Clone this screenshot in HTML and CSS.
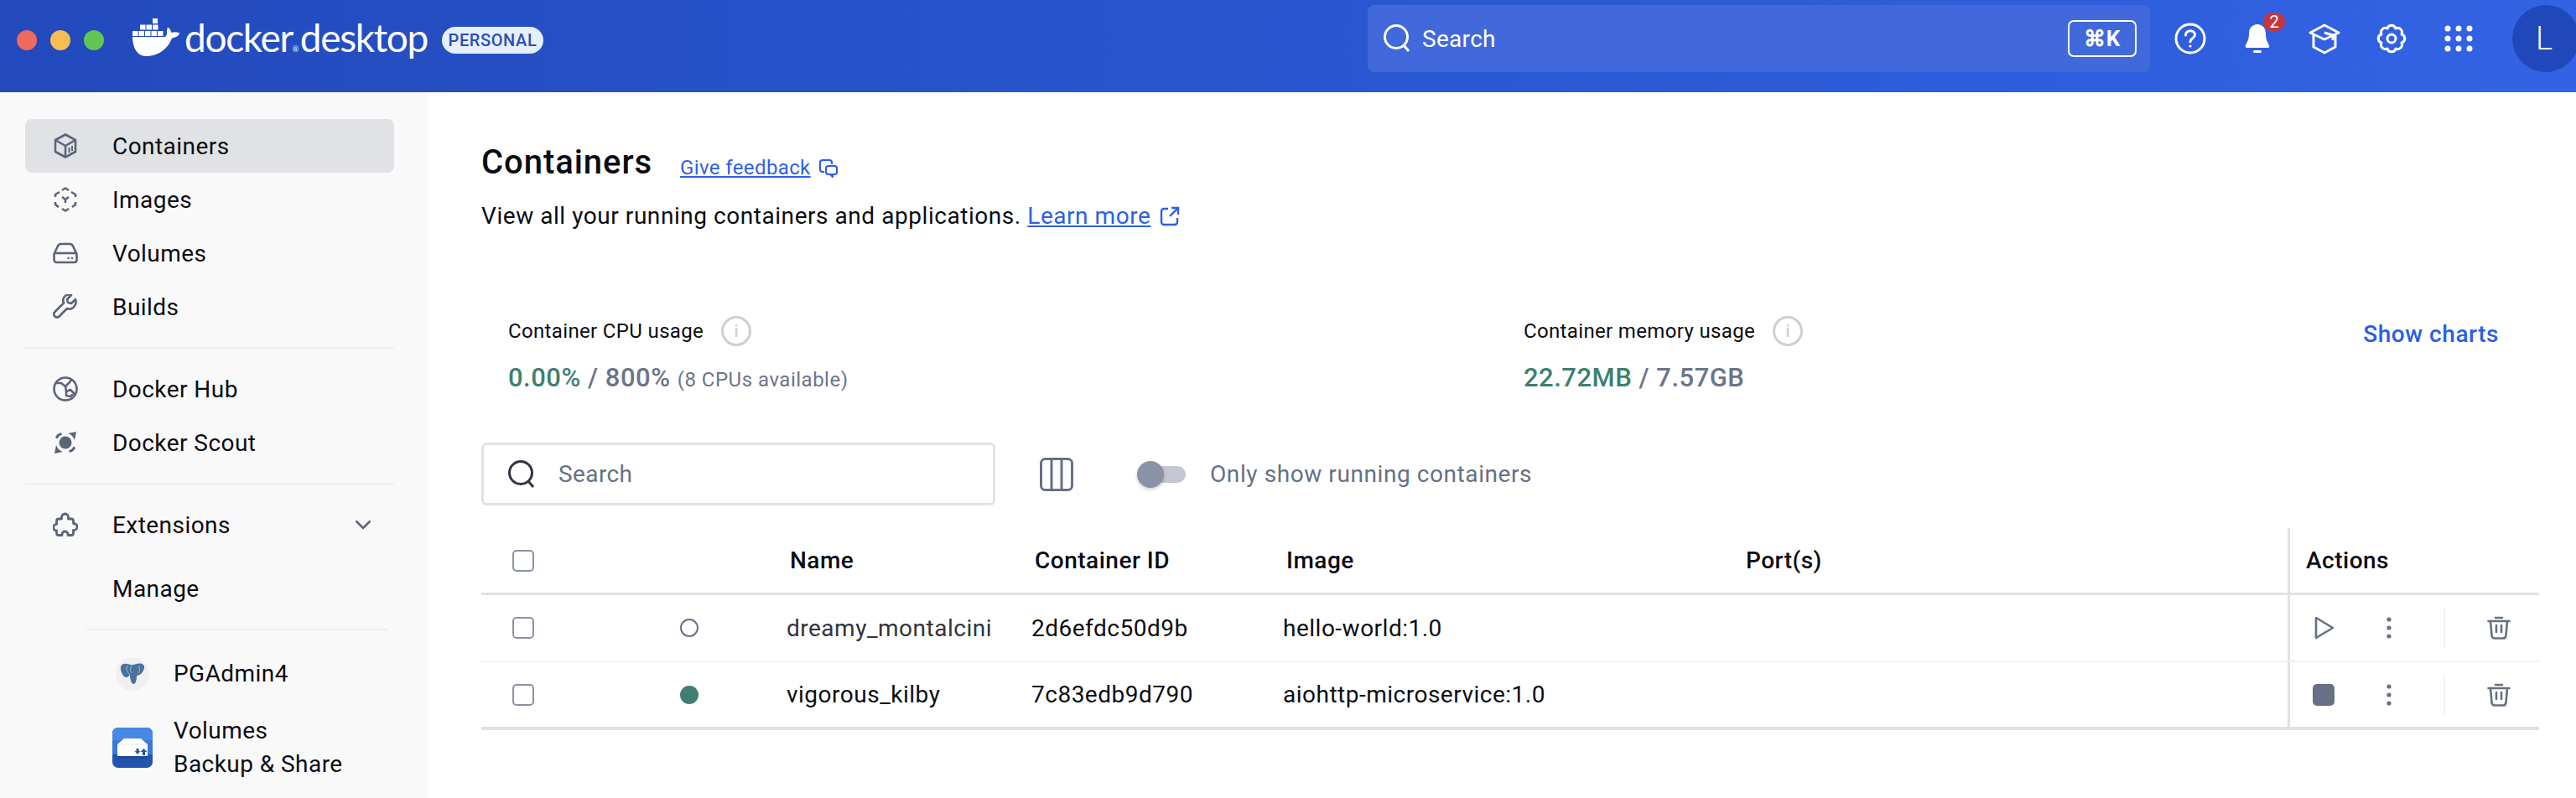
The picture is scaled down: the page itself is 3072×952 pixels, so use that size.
FILE: index.html
```html
<!DOCTYPE html>
<html lang="en">
<head>
<meta charset="utf-8">
<title>Docker Desktop</title>
<link rel="stylesheet" href="styles.css">
</head>
<body>
<div class="app">
  <header class="topbar">
    <div class="lights"><span class="light red"></span><span class="light yellow"></span><span class="light green"></span></div>
    <div class="brand">
      <svg class="whale" viewBox="0 0 57 45" fill="#fff"><rect x="24" y="0" width="6" height="6"/><rect x="9" y="7.500" width="6.500" height="6"/><rect x="16.500" y="7.500" width="6.500" height="6"/><rect x="24" y="7.500" width="6.500" height="6"/><rect x="0" y="15" width="6.500" height="6"/><rect x="7.500" y="15" width="6.500" height="6"/><rect x="15" y="15" width="6.500" height="6"/><rect x="22.500" y="15" width="6.500" height="6"/><rect x="30" y="15" width="6.500" height="6"/><path d="M0 22H38C40 22 41 20 41 16C41 14 41.500 12 42 10.500C44.500 12 46 14.500 46.500 17C49 16 52.500 16 56.500 17.500C55 21 51 23 47 23.500C43 35 32 45 16 45C6 45 0 35 0 22z"/></svg>
      <span class="wordmark">docker<i class="reg">®</i><span class="wordmark-b">desktop</span></span>
      <span class="plan">PERSONAL</span>
    </div>
    <div class="global-search">
      <svg class="ic33" viewBox="0 0 34 34" fill="none" stroke="#fff" stroke-width="3"><circle cx="16" cy="15" r="13.500"/><path d="M25 25l6 7"/></svg>
      <span class="global-search-text">Search</span>
      <kbd class="shortcut">⌘K</kbd>
    </div>
    <div class="top-icons">
      <span class="top-icon"><svg viewBox="0 0 38 38" fill="none" stroke="#fff" stroke-width="3"><circle cx="19" cy="19" r="17"/><path d="M13.500 15c0-3.200 2.400-5.300 5.500-5.300s5.500 2 5.500 4.800c0 4.500-5.500 4-5.500 8.300" stroke-linecap="round"/><circle cx="19" cy="28" r="1.600" fill="#fff" stroke="none"/></svg></span>
      <span class="top-icon bell"><svg viewBox="0 0 38 38" fill="#fff"><path d="M19 2c6.500 0 10 5 10 11 0 7 2 10 4 14 .8 1.400 0 3-1.500 3H6.500C5 30 4.200 28.400 5 27c2-4 4-7 4-14C9 7 12.500 2 19 2z"/><rect x="14" y="33" width="10" height="3" rx="1.500"/></svg><span class="badge">2</span></span>
      <span class="top-icon"><svg viewBox="0 0 38 38" fill="none" stroke="#fff" stroke-width="3" stroke-linejoin="round"><path d="M19 3L2 12l17 8 17-8z"/><path d="M6 15v14l13 7 13-7V15"/><path d="M19 12l10 3v6"/></svg></span>
      <span class="top-icon"><svg viewBox="0 0 38 38" fill="none" stroke="#fff" stroke-width="3" stroke-linejoin="round"><path d="M14 7A5.200 5.200 0 0 1 24 7A5.200 5.200 0 0 1 31 14A5.200 5.200 0 0 1 31 24A5.200 5.200 0 0 1 24 31A5.200 5.200 0 0 1 14 31A5.200 5.200 0 0 1 7 24A5.200 5.200 0 0 1 7 14A5.200 5.200 0 0 1 14 7z"/><circle cx="19" cy="19" r="5"/></svg></span>
      <span class="top-icon"><svg viewBox="0 0 38 38" fill="#fff"><circle cx="6" cy="7" r="3.500"/><circle cx="19" cy="7" r="3.500"/><circle cx="32" cy="7" r="3.500"/><circle cx="6" cy="19" r="3.500"/><circle cx="19" cy="19" r="3.500"/><circle cx="32" cy="19" r="3.500"/><circle cx="6" cy="31" r="3.500"/><circle cx="19" cy="31" r="3.500"/><circle cx="32" cy="31" r="3.500"/></svg></span>
    </div>
    <div class="avatar">L</div>
  </header>
  <div class="body">
    <nav class="sidebar">
      <a class="nav-item active"><svg class="nav-icon" viewBox="0 0 30 30" fill="none" stroke="#5b6478" stroke-width="2.600" stroke-linejoin="round"><path d="M15 1.500L27 8v14l-12 6.500L3 22V8z"/><path d="M3 8l12 7 12-7M15 15v13.500"/><path d="M19.500 17v6M23 15v6" stroke-width="2"/></svg><span>Containers</span></a>
      <a class="nav-item"><svg class="nav-icon" viewBox="0 0 30 30" fill="none" stroke="#5b6478" stroke-width="2.600" stroke-linejoin="round"><path d="M11 4l4-2.500 4 2.500M22 6l5 3v3M3 12V9l5-3M3 18v3l4 3M27 18v3l-4 3M11 26l4 2.500 4-2.500"/><path d="M11 12l4 3 4-3M15 15v4"/></svg><span>Images</span></a>
      <a class="nav-item"><svg class="nav-icon" viewBox="0 0 30 30" fill="none" stroke="#5b6478" stroke-width="2.600"><path d="M1.500 16L6 6.500C6.800 4.800 8 4 10 4h10c2 0 3.200.8 4 2.500l4.500 9.500v7c0 1.800-1.200 3-3 3h-21c-1.800 0-3-1.200-3-3z"/><path d="M1.500 15h27"/><circle cx="18.500" cy="21" r="1.300" fill="#5b6478" stroke="none"/><circle cx="23" cy="21" r="1.300" fill="#5b6478" stroke="none"/></svg><span>Volumes</span></a>
      <a class="nav-item"><svg class="nav-icon" viewBox="0 0 30 30" fill="none" stroke="#5b6478" stroke-width="2.600" stroke-linejoin="round"><path d="M27 6l-5 5-4-1-1-4 5-5c-4-1.500-8.500.5-9.500 4.500-.5 2-.2 3.500.5 5L2.500 21c-2 2-1.500 4 0 5.500s3.500 1.500 5 0L17 17c1.500.7 3.500.8 5 .3 4-1.300 6.500-6.300 5-11.300z"/></svg><span>Builds</span></a>
      <div class="nav-rule"></div>
      <a class="nav-item"><svg class="nav-icon" viewBox="0 0 30 30" fill="none" stroke="#5b6478" stroke-width="2.600" stroke-linejoin="round"><circle cx="15" cy="15" r="13.500"/><path d="M4 8h6l5 4 5-5 3-4M16 18l5-2 4 4-4 4-5-1z"/><path d="M15 12l1 6"/></svg><span>Docker Hub</span></a>
      <a class="nav-item"><svg class="nav-icon" viewBox="0 0 30 30" fill="#5b6478"><circle cx="15" cy="15" r="7.500"/><path d="M18 4l10-2-2 10c-1-3.500-4.500-7-8-8zM12 26L2 28l2-10c1 3.500 4.500 7 8 8z"/><path d="M3 9c1-3 3-5 7-6l1 2.500C8.500 6.200 6.500 8 5.500 10.500zM27 21c-1 3-3 5-7 6l-1-2.500c2.500-.7 4.500-2.500 5.500-5z"/></svg><span>Docker Scout</span></a>
      <div class="nav-rule"></div>
      <a class="nav-item"><svg class="nav-icon" viewBox="0 0 30 30" fill="none" stroke="#5b6478" stroke-width="2.800" stroke-linejoin="round"><path d="M10.500 8V6a4 4 0 0 1 8 0v2H22a2.500 2.500 0 0 1 2.500 2.500V13.500h.5a4 4 0 0 1 0 8h-.5V25a2.500 2.500 0 0 1-2.500 2.500h-4v-1a3.500 3.500 0 0 0-7 0v1H7A2.500 2.500 0 0 1 4.500 25V22a3.800 3.800 0 0 1 0-7.600V10.500A2.500 2.500 0 0 1 7 8z"/></svg><span>Extensions</span><svg class="chevron" viewBox="0 0 20 12" fill="none" stroke="#5b6478" stroke-width="2.600"><path d="M1.500 1.500L10 10l8.500-8.500"/></svg></a>
      <a class="nav-item manage"><span class="nav-spacer"></span><span>Manage</span></a>
      <div class="nav-rule inner"></div>
      <a class="ext pg"><span class="ext-icon"><span class="pg-disc"><svg class="pg-logo" viewBox="0 0 30 26"><path d="M8 1C3 0 0 3 1 8C2 12 4 17 8 17C10 17 10 15 12 14C12 18 13 24 16 25C19 25 20 20 20 15C24 15 28 11 29 6C30 2 26 0 22 .5C19 1 17 2 15 2C13 2 11 1.500 8 1z" fill="#49719c"/><path d="M9 3c-2 3-1 8 3 11M15 2c-3 3-3 7-1 10M22 3c2 2 2 6 0 9" fill="none" stroke="#c9d5e3" stroke-width=".7"/></svg></span></span><span>PGAdmin4</span></a>
      <a class="ext vb"><span class="ext-icon"><svg viewBox="0 0 48 48" width="48" height="48"><rect width="48" height="48" rx="7" fill="#2254b0"/><path d="M0 32V7a7 7 0 0 1 7-7h34a7 7 0 0 1 7 7v25z" fill="#3a79d8"/><path d="M0 15V7a7 7 0 0 1 7-7h34a7 7 0 0 1 7 7v8z" fill="#4689e4"/><path d="M6 34h36v3H6z" fill="#1d4aa0"/><path d="M14 13h20l8 7v13a1 1 0 0 1-1 1H7a1 1 0 0 1-1-1V20z" fill="#fff"/><path d="M6 20h36" stroke="#dfe6f3"/><path d="M28.500 25h3v3h2l-3.500 4-3.500-4h2zM36 33h3v-4h2.500l-4-4-4 4H36z" fill="#2254b0"/></svg></span><span class="ext-label">Volumes<br>Backup &amp; Share</span></a>
    </nav>
    <main class="main">
      <div class="title-row">
        <h1 class="title">Containers</h1>
        <a class="feedback">Give feedback</a>
        <svg class="feedback-icon" viewBox="0 0 24 24" fill="none" stroke="#2e5fe5" stroke-width="2.200" stroke-linejoin="round"><path d="M16 7V5a3 3 0 0 0-3-3H5a3 3 0 0 0-3 3v8a3 3 0 0 0 3 3h2"/><rect x="9" y="9" width="13" height="10" rx="3"/><path d="M17 19v3l-3-3"/></svg>
      </div>
      <p class="subtitle">View all your running containers and applications. <a class="link">Learn more</a><svg class="ext-link" viewBox="0 0 24 24" fill="none" stroke="#2e5fe5" stroke-width="2.400"><path d="M10 3H5a3 3 0 0 0-3 3v13a3 3 0 0 0 3 3h13a3 3 0 0 0 3-3v-5"/><path d="M12 12L22 2M14 2h8v8"/></svg></p>
      <section class="stats">
        <div class="stat cpu">
          <div class="stat-label">Container CPU usage<span class="info">i</span></div>
          <div class="stat-value"><b class="green">0.00%</b> / 800% <small>(8 CPUs available)</small></div>
        </div>
        <div class="stat mem">
          <div class="stat-label">Container memory usage<span class="info">i</span></div>
          <div class="stat-value"><b class="green">22.72MB</b> / 7.57GB</div>
        </div>
        <a class="charts">Show charts</a>
      </section>
      <div class="toolbar">
        <label class="search-box">
          <svg class="ic33" viewBox="0 0 34 34" fill="none" stroke="#2f3542" stroke-width="3"><circle cx="16" cy="15" r="13.500"/><path d="M25 25l6 7"/></svg>
          <span class="placeholder">Search</span>
        </label>
        <svg class="columns" viewBox="0 0 40 40" fill="none" stroke="#677084" stroke-width="3"><rect x="1.500" y="1.500" width="37" height="37" rx="5"/><path d="M14 2v36M26 2v36"/></svg>
        <span class="toggle"><span class="knob"></span></span>
        <span class="toggle-label">Only show running containers</span>
      </div>
      <div class="table">
        <div class="row head">
          <span class="cell check"><span class="box"></span></span>
          <span class="cell status"></span>
          <span class="cell name">Name</span>
          <span class="cell cid">Container ID</span>
          <span class="cell image">Image</span>
          <span class="cell ports">Port(s)</span>
          <span class="cell actions">Actions</span>
        </div>
        <div class="row">
          <span class="cell check"><span class="box"></span></span>
          <span class="cell status"><span class="dot off"></span></span>
          <span class="cell name dim">dreamy_montalcini</span>
          <span class="cell cid">2d6efdc50d9b</span>
          <span class="cell image">hello-world:1.0</span>
          <span class="cell ports"></span>
          <span class="cell actions">
            <span class="act-main"><svg viewBox="0 0 26 28" width="26" height="28" fill="none" stroke="#677084" stroke-width="2.600" stroke-linejoin="round"><path d="M4 2l20 12L4 26z"/></svg></span>
            <svg class="more" viewBox="0 0 6 26" fill="#677084"><circle cx="3" cy="3" r="2.600"/><circle cx="3" cy="13" r="2.600"/><circle cx="3" cy="23" r="2.600"/></svg>
            <span class="act-rule"></span>
            <svg class="trash" viewBox="0 0 28 28" fill="none" stroke="#677084" stroke-width="2.600" stroke-linecap="round"><path d="M1.500 6h25M10 2h8"/><path d="M4 6l1.500 17c.2 2 1.500 3.500 3.500 3.500h10c2 0 3.300-1.500 3.500-3.500L24 6"/><path d="M11 11v8M17 11v8"/></svg>
          </span>
        </div>
        <div class="row last">
          <span class="cell check"><span class="box"></span></span>
          <span class="cell status"><span class="dot on"></span></span>
          <span class="cell name">vigorous_kilby</span>
          <span class="cell cid">7c83edb9d790</span>
          <span class="cell image">aiohttp-microservice:1.0</span>
          <span class="cell ports"></span>
          <span class="cell actions">
            <span class="act-main"><span class="stop"></span></span>
            <svg class="more" viewBox="0 0 6 26" fill="#677084"><circle cx="3" cy="3" r="2.600"/><circle cx="3" cy="13" r="2.600"/><circle cx="3" cy="23" r="2.600"/></svg>
            <span class="act-rule"></span>
            <svg class="trash" viewBox="0 0 28 28" fill="none" stroke="#677084" stroke-width="2.600" stroke-linecap="round"><path d="M1.500 6h25M10 2h8"/><path d="M4 6l1.500 17c.2 2 1.500 3.500 3.500 3.500h10c2 0 3.300-1.500 3.500-3.500L24 6"/><path d="M11 11v8M17 11v8"/></svg>
          </span>
        </div>
      </div>
    </main>
  </div>
</div>
</body>
</html>
```
FILE: styles.css
```css
* { box-sizing: border-box; }
html, body { margin: 0; height: 100%; overflow: hidden; background: #fff; }
body { font-family: Roboto, "Liberation Sans", sans-serif; color: #0b0d12; font-size: 28px; }
a { text-decoration: none; color: inherit; }
svg { display: block; flex: none; }

.app { display: flex; flex-direction: column; height: 952px; }

/* top bar */
.topbar { height: 110px; flex: none; display: flex; background: linear-gradient(90deg, #234abc 0%, #2a57d2 55%, #3363e4 100%); color: #fff; position: relative; }
.lights { display: flex; gap: 16px; padding: 36px 0 0 20px; width: 158px; flex: none; }
.light { width: 24px; height: 24px; border-radius: 50%; }
.red { background: #f0695f; }
.yellow { background: #f6bd4f; }
.green { background: #61c554; }
.brand { display: flex; align-items: flex-start; width: 1473px; flex: none; padding-top: 22px; }
.whale { width: 57px; height: 45px; margin-right: 5px; }
.wordmark { font-family: Lato, sans-serif; font-weight: 400; font-size: 46px; line-height: 46px; letter-spacing: -1.350px; display: flex; align-items: baseline; }
.reg { font-style: normal; font-size: 9px; line-height: 9px; width: 8px; letter-spacing: 0; }
.wordmark-b { margin-left: 1px; }
.plan { margin: 10px 0 0 17px; width: 121px; height: 32px; border-radius: 16px; background: #e5f0fb; color: #2a4db8; font-size: 20px; line-height: 32px; font-weight: 500; letter-spacing: .6px; text-align: center; }
.global-search { margin-top: 6px; width: 933px; height: 80px; border-radius: 8px; background: #4169dc; display: flex; align-items: center; padding: 0 16px 0 18px; }
.ic33 { width: 34px; height: 34px; }
.global-search-text { margin-left: 13px; font-size: 28px; letter-spacing: .3px; flex: 1; }
.shortcut { width: 82px; height: 44px; border: 2px solid #fff; border-radius: 7px; font-family: Roboto, sans-serif; font-weight: 700; font-size: 26px; line-height: 40px; text-align: center; letter-spacing: 1px; }
.top-icons { display: flex; margin-left: 29px; gap: 42px; padding-top: 27px; }
.top-icon { position: relative; width: 38px; height: 38px; }
.top-icon svg { width: 38px; height: 38px; }
.badge { position: absolute; left: 26px; top: -12px; width: 26px; height: 22px; border-radius: 11px; background: #c4363f; font-size: 20px; line-height: 22px; text-align: center; }
.avatar { position: absolute; left: 2996px; top: 6px; width: 80px; height: 80px; border-radius: 50%; background: #2148bb; font-size: 38px; font-weight: 300; line-height: 80px; padding-left: 28px; }

/* layout */
.body { display: flex; flex: 1; min-height: 0; }
.sidebar { width: 510px; flex: none; background: #f9f9fa; padding: 32px 40px 0 30px; display: flex; flex-direction: column; }
.nav-item { height: 64px; flex: none; display: flex; align-items: center; padding-left: 33px; border-radius: 8px; font-size: 28px; letter-spacing: .45px; }
.nav-item.active { background: #e1e2e6; }
.nav-icon { width: 30px; height: 30px; margin-right: 41px; }
.chevron { width: 20px; height: 12px; margin-left: auto; margin-right: 27px; }
.nav-rule { height: 2px; background: #efeff0; margin: 16px 0; flex: none; }
.nav-rule.inner { margin: 16px 8px 0 72px; }
.manage { margin-top: 12px; }
.nav-spacer { width: 71px; flex: none; }
.ext { display: flex; align-items: center; font-size: 28px; letter-spacing: .45px; line-height: 40px; }
.pg { margin-top: 32px; height: 40px; }
.vb { margin-top: 28px; height: 80px; }
.ext-icon { width: 48px; margin: 0 25px 0 104px; display: flex; justify-content: center; flex: none; }
.pg-disc { width: 40px; height: 40px; border-radius: 50%; background: #f0f0f1; display: flex; align-items: center; justify-content: center; }
.pg-logo { width: 30px; height: 26px; }

.main { flex: 1; min-width: 0; padding: 62px 44px 0 64px; }
.title-row { display: flex; align-items: center; height: 46px; }
.title { margin: -3px 0 0; font-size: 40px; font-weight: 500; letter-spacing: .95px; }
.feedback { margin: 10px 0 0 33px; font-size: 24px; letter-spacing: .38px; color: #2e5fe5; text-decoration: underline; }
.feedback-icon { width: 24px; height: 24px; margin: 12px 0 0 9px; }
.subtitle { margin: 20px 0 0; height: 40px; font-size: 28px; line-height: 40px; letter-spacing: .55px; display: flex; align-items: center; white-space: pre; }
.link { color: #2e5fe5; text-decoration: underline; }
.ext-link { width: 24px; height: 24px; margin-left: 11px; }

.stats { margin-top: 98px; display: flex; height: 96px; padding-left: 32px; position: relative; }
.stat { display: flex; flex-direction: column; }
.cpu { width: 1211px; }
.stat-label { height: 38px; display: flex; align-items: center; font-size: 24px; letter-spacing: .35px; }
.info { margin-left: 21px; width: 36px; height: 36px; border: 3px solid #cfcfcf; border-radius: 50%; color: #cfcfcf; font-size: 20px; font-weight: 500; line-height: 30px; text-align: center; }
.stat-value { margin-top: 18px; height: 38px; font-size: 31px; line-height: 38px; font-weight: 500; color: #6c7489; letter-spacing: .5px; }
.stat-value b { font-weight: 500; }
.stat-value small { font-size: 24px; font-weight: 400; letter-spacing: .5px; }
.stat-value .green { background: none; color: #3f7f70; }
.charts { position: absolute; right: 48px; top: 4px; font-size: 28px; font-weight: 500; letter-spacing: .55px; color: #2a5fe0; line-height: 38px; }

.toolbar { margin-top: 56px; height: 75px; display: flex; align-items: center; }
.search-box { width: 613px; height: 75px; border: 3px solid #e1e2e6; border-radius: 6px; display: flex; align-items: center; padding-left: 28px; }
.placeholder { margin-left: 27px; color: #677084; font-size: 28px; letter-spacing: .4px; }
.columns { width: 40px; height: 40px; margin-left: 53px; }
.toggle { margin-left: 76px; width: 58px; height: 20px; border-radius: 10px; background: #c4c7d1; position: relative; }
.knob { position: absolute; left: 0; top: -6px; width: 32px; height: 32px; border-radius: 50%; background: #8a92a6; box-shadow: 0 2px 4px rgba(0,0,0,.2); }
.toggle-label { margin-left: 29px; color: #677084; font-size: 28px; letter-spacing: .58px; }

.table { margin-top: 27px; }
.row { display: grid; grid-template-columns: 100px 264px 292px 300px 552px 646px 300px; height: 80px; border-bottom: 2px solid #f1f1f2; align-items: center; font-size: 28px; letter-spacing: .5px; }
.row.head { height: 80px; border-bottom: 3px solid #e1e1e2; font-weight: 500; }
.row.last { height: 81px; border-bottom: 4px solid #e1e1e2; }
.cell { display: flex; align-items: center; height: 100%; white-space: nowrap; }
.head .name, .head .cid, .head .image { padding-left: 4px; }
.check { justify-content: center; }
.box { width: 26px; height: 26px; border: 2.500px solid #8a92a6; border-radius: 5px; }
.status { padding-left: 137px; }
.dot { width: 22px; height: 22px; border-radius: 50%; }
.dot.off { border: 2.500px solid #677084; }
.dot.on { background: #3f7f70; }
.name.dim { color: #30343c; }
.actions { border-left: 3px solid #e1e1e2; padding-left: 19px; }
.act-main { width: 32px; display: flex; justify-content: center; margin-left: 5px; }
.stop { width: 26px; height: 26px; border-radius: 5px; background: #677084; }
.more { width: 6px; height: 26px; margin-left: 59px; }
.act-rule { width: 2px; height: 48px; background: #f1f1f2; margin-left: 62px; }
.trash { width: 28px; height: 28px; margin-left: 50px; }
```
